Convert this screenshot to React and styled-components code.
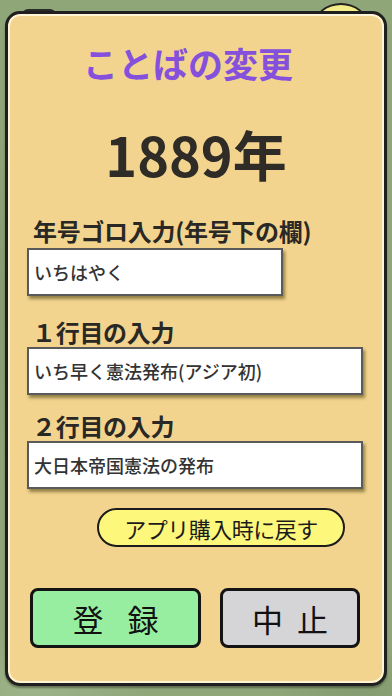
import React from "react";
import styled, { createGlobalStyle } from "styled-components";

const Global = createGlobalStyle`
  html, body { margin: 0; padding: 0; }
  body {
    width: 392px;
    height: 696px;
    overflow: hidden;
    font-family: "Noto Sans CJK JP", "Noto Sans", sans-serif;
    background: #8fa679;
  }
`;

const Screen = styled.div`
  position: relative;
  width: 392px;
  height: 696px;
  box-sizing: border-box;
  padding: 11px 5px 10px 5px;
  background:
    radial-gradient(ellipse 120px 60px at 30px 690px, rgba(170,190,150,0.5), transparent),
    radial-gradient(ellipse 90px 50px at 360px 692px, rgba(120,145,100,0.5), transparent),
    radial-gradient(ellipse 60px 200px at 2px 300px, rgba(120,140,100,0.4), transparent),
    #8fa679;
`;

const Sun = styled.div`
  position: absolute;
  left: 314px;
  top: 3px;
  width: 50px;
  height: 40px;
  border-radius: 50%;
  background: #f3ee8a;
  border: 2px solid #222;
`;

const Tab = styled.div`
  position: absolute;
  left: 22px;
  top: 9px;
  width: 34px;
  height: 12px;
  border-radius: 6px;
  background: #2a2a2a;
`;

const Panel = styled.div`
  position: relative;
  z-index: 1;
  box-sizing: border-box;
  height: 675px;
  border: 3px solid #1f1f1f;
  border-radius: 15px;
  background: #f2d48f;
  box-shadow: inset 0 0 0 2px #fff4d6, 0 2px 2px rgba(0,0,0,0.35);
  display: flex;
  flex-direction: column;
  align-items: stretch;
  padding: 28px 0 0 0;
`;

const Title = styled.div`
  font-size: 35px;
  line-height: 42px;
  font-weight: 700;
  color: #8450dc;
  text-align: center;
  padding-right: 16px;
`;

const Year = styled.div`
  margin-top: 38px;
  font-size: 54px;
  line-height: 64px;
  font-weight: 700;
  color: #2f2b27;
  text-align: center;
`;

const Field = styled.div`
  display: flex;
  flex-direction: column;
  padding-left: 19px;
  margin-top: ${(p) => p.$top}px;
`;

const Label = styled.div`
  font-size: 24px;
  line-height: 28px;
  font-weight: 700;
  color: #2a2825;
  padding-left: ${(p) => p.$indent}px;
  white-space: nowrap;
  letter-spacing: -0.3px;
`;

const Input = styled.div`
  box-sizing: border-box;
  width: ${(p) => p.$w}px;
  height: 48px;
  margin-top: ${(p) => p.$gap}px;
  background: #fff;
  border: 2px solid #5a5a5a;
  box-shadow: 2px 3px 3px rgba(70, 60, 10, 0.55);
  display: flex;
  align-items: center;
  padding-left: 5px;
  font-size: 18px;
  font-weight: 500;
  color: #333;
  white-space: nowrap;
`;

const Pill = styled.div`
  box-sizing: border-box;
  align-self: flex-start;
  margin-left: 89px;
  margin-top: 19px;
  width: 248px;
  height: 39px;
  border: 2px solid #1b1b1b;
  border-radius: 20px;
  background: #fdf77b;
  display: flex;
  align-items: center;
  justify-content: center;
  font-size: 22px;
  font-weight: 400;
  color: #1b1b1b;
  letter-spacing: -0.5px;
`;

const ButtonRow = styled.div`
  display: flex;
  gap: 19px;
  padding-left: 22px;
  margin-top: 41px;
`;

const Button = styled.div`
  box-sizing: border-box;
  width: ${(p) => p.$w}px;
  height: 60px;
  border: 3px solid #141414;
  border-radius: 8px;
  background: ${(p) => p.$bg};
  display: flex;
  align-items: center;
  justify-content: center;
  gap: ${(p) => p.$gap}px;
  font-size: 31px;
  font-weight: 400;
  color: #111;
`;

export default function App() {
  return (
    <>
      <Global />
      <Screen>
        <Tab />
        <Sun />
        <Panel>
          <Title>ことばの変更</Title>
          <Year>1889年</Year>
          <Field $top={31}>
            <Label $indent={6}>年号ゴロ入力(年号下の欄)</Label>
            <Input $w={256} $gap={3}>いちはやく</Input>
          </Field>
          <Field $top={22}>
            <Label $indent={5}>１行目の入力</Label>
            <Input $w={336} $gap={1}>いち早く憲法発布(アジア初)</Input>
          </Field>
          <Field $top={17}>
            <Label $indent={5}>２行目の入力</Label>
            <Input $w={336} $gap={1}>大日本帝国憲法の発布</Input>
          </Field>
          <Pill>アプリ購入時に戻す</Pill>
          <ButtonRow>
            <Button $w={171} $bg="#98eea0" $gap={24}>
              <span>登</span>
              <span>録</span>
            </Button>
            <Button $w={140} $bg="#d5d4d7" $gap={14}>
              <span>中</span>
              <span>止</span>
            </Button>
          </ButtonRow>
        </Panel>
      </Screen>
    </>
  );
}
